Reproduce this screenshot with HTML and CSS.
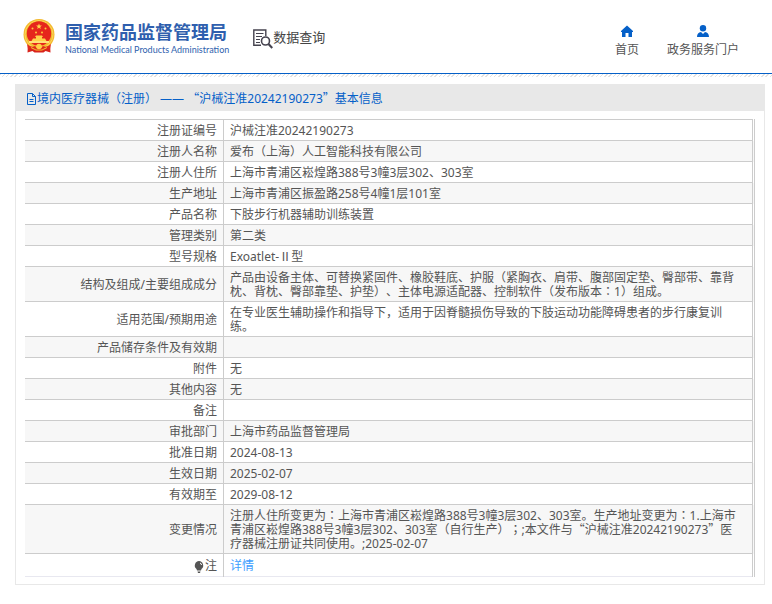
FILE: index.html
```
<!DOCTYPE html>
<html lang="zh-CN">

<head>
    <meta charset="utf-8">
    <title>数据查询 - 国家药品监督管理局</title>
    <link rel="stylesheet" href="styles.css">
</head>

<body>
    <header class="header">
        <a class="logo" href="#">
            <svg class="emblem" viewBox="0 0 32 35">
                <path d="M5 24l-.5 9.500 5-1.500 2 1.500h9l2-1.500 5 1.500L27 24z" fill="#d9241c" />
                <circle cx="16" cy="15.500" r="15.500" fill="#f3b92e" />
                <circle cx="16" cy="15.500" r="14" fill="none" stroke="#fbd65b" stroke-width="1" />
                <circle cx="16" cy="14.500" r="12.200" fill="#e6261c" />
                <path d="M16 4.500l.8 2h2.100l-1.700 1.400.6 2.100-1.800-1.200-1.800 1.200.6-2.100-1.700-1.400h2.100z" fill="#ffd84a" />
                <g fill="#ffc93c">
                    <circle cx="9.500" cy="9.500" r="1" />
                    <circle cx="22.500" cy="9.500" r="1" />
                    <circle cx="13" cy="13.500" r="1" />
                    <circle cx="19" cy="13.500" r="1" />
                </g>
                <path d="M12 18l1-1.500h6L20 18h-1v1.500h3l1.500 2.500h-15l1.500-2.500h3V18z" fill="#ffd24a" />
                <path d="M6 22h20v2H6z" fill="#ffe07a" />
                <path d="M4 25q4 4 8 2l2 2h4l2-2q4 2 8-2l-1 5-5-1-2 3h-8l-2-3-5 1z" fill="#e02a1c" />
                <circle cx="16" cy="27.500" r="2.800" fill="#ffcf47" />
                <path d="M8 28.500l5 2.500h6l5-2.500" fill="none" stroke="#f3b92e" />
            </svg>
            <span class="logo-text">
                <strong class="logo-cn">国家药品监督管理局</strong>
                <span class="logo-en">National Medical Products Administration</span>
            </span>
        </a>
        <a class="query" href="#">
            <svg class="query-icon" viewBox="0 0 20 20" fill="none" stroke="#45434f">
                <path d="M8 16.300H.8V1h12v6" stroke-width="1.400" />
                <path d="M3 4.500h7.500M3 7.500h6M3 10.500h4M3 13.500h4" stroke-width="1.200" />
                <circle cx="12.500" cy="12" r="4" stroke-width="1.600" />
                <path d="M15.500 15l3.800 4" stroke-width="2.200" />
            </svg>
            <span>数据查询</span>
        </a>
        <nav class="nav">
            <a href="#">
                <svg viewBox="0 0 12 12" fill="#0560c8">
                    <path d="M6 .5L0 6v1h1v5h3.500V8h3v4H11V7h1V6z" />
                </svg>
                <span>首页</span>
            </a>
            <a href="#">
                <svg viewBox="0 0 12 12" fill="#0560c8">
                    <circle cx="6" cy="3.200" r="3.200" />
                    <path d="M0 12c0-3 1.500-4.500 4-5l2 2 2-2c2.500.5 4 2 4 5z" />
                </svg>
                <span>政务服务门户</span>
            </a>
        </nav>
    </header>

    <main class="panel">
        <h1 class="panel-title">
            <svg class="doc-icon" viewBox="0 0 11 12" fill="none" stroke="#0560c8">
                <path d="M1.500.5h5l3 3v8h-8zM6.500.5v3h3M3.500 6.500h4M3.500 8.500h4" />
            </svg>
            <span>境内医疗器械（注册） —— <span class="cjk">“</span>沪械注准20242190273<span class="cjk">”</span>基本信息</span>
        </h1>
        <div class="panel-body">
            <table class="info">
                <tr><th>注册证编号</th><td>沪械注准20242190273</td></tr>
                <tr><th>注册人名称</th><td>爱布（上海）人工智能科技有限公司</td></tr>
                <tr><th>注册人住所</th><td>上海市青浦区崧煌路388号3幢3层302、303室</td></tr>
                <tr><th>生产地址</th><td>上海市青浦区振盈路258号4幢1层101室</td></tr>
                <tr><th>产品名称</th><td>下肢步行机器辅助训练装置</td></tr>
                <tr><th>管理类别</th><td>第二类</td></tr>
                <tr><th>型号规格</th><td>Exoatlet-Ⅱ型</td></tr>
                <tr><th>结构及组成/主要组成成分</th><td>产品由设备主体、可替换紧固件、橡胶鞋底、护服（紧胸衣、肩带、腹部固定垫、臀部带、靠背枕、背枕、臀部靠垫、护垫）、主体电源适配器、控制软件（发布版本<span class="mid" lang="zh-TW">：</span>1）组成。</td></tr>
                <tr><th>适用范围/预期用途</th><td>在专业医生辅助操作和指导下，适用于因脊髓损伤导致的下肢运动功能障碍患者的步行康复训练。</td></tr>
                <tr><th>产品储存条件及有效期</th><td></td></tr>
                <tr><th>附件</th><td>无</td></tr>
                <tr><th>其他内容</th><td>无</td></tr>
                <tr><th>备注</th><td></td></tr>
                <tr><th>审批部门</th><td>上海市药品监督管理局</td></tr>
                <tr><th>批准日期</th><td>2024-08-13</td></tr>
                <tr><th>生效日期</th><td>2025-02-07</td></tr>
                <tr><th>有效期至</th><td>2029-08-12</td></tr>
                <tr><th>变更情况</th><td>注册人住所变更为<span class="mid" lang="zh-TW">：</span>上海市青浦区崧煌路388号3幢3层302、303室。生产地址变更为<span class="mid" lang="zh-TW">：</span>1.上海市青浦区崧煌路388号3幢3层302、303室（自行生产）<span class="mid" lang="zh-TW">；</span>;本文件与<span class="cjk">“</span>沪械注准20242190273<span class="cjk">”</span>医疗器械注册证共同使用。;2025-02-07</td></tr>
                <tr class="note">
                    <th><svg class="bulb" viewBox="0 0 10 12"><path d="M5 0a4.500 4.500 0 0 1 2.500 8L7 9.500H3L2.500 8A4.500 4.500 0 0 1 5 0zM3.500 10.500h3L6 12H4z" fill="#555" /><path d="M6 2q1.500.5 1.500 2" fill="none" stroke="#fff" /></svg>注</th>
                    <td><a href="#">详情</a></td>
                </tr>
            </table>
        </div>
    </main>
</body>

</html>
```
FILE: styles.css
```
body {
    margin: 0;
    background: #fff;
    color: #555;
    font-family: "Noto Sans", "Noto Sans CJK SC", sans-serif;
    font-size: 12px;
    line-height: 14px;
    text-spacing-trim: space-all;
}

a {
    color: inherit;
    text-decoration: none;
}

/* full-width quotes */
.cjk {
    font-family: "Noto Sans CJK SC", sans-serif;
    line-height: 0;
}

/* punctuation centred in its cell */
.mid {
    font-family: "Noto Sans CJK TC", sans-serif;
    line-height: 0;
}

.header {
    display: flex;
    height: 73px;
    padding: 0 33px 0 23px;
    border-bottom: 1px solid #0560c8;
}

.header::after {
    content: "";
    position: absolute;
    left: 0;
    right: 0;
    top: 74px;
    height: 3px;
    background: repeating-linear-gradient(135deg, #e2e2e2 0 1px, #fff 1px 3px);
}

.logo {
    display: flex;
    align-items: center;
    gap: 10px;
    color: #2f5fae;
}

.emblem {
    width: 32px;
    height: 35px;
}

.logo-text {
    display: flex;
    flex-direction: column;
    gap: 2px;
    padding-top: 4px;
}

.logo-cn {
    font-size: 18px;
    line-height: 20px;
}

.logo-en {
    font-family: Lato, sans-serif;
    font-size: 9px;
    line-height: 12px;
}

.query {
    display: flex;
    align-items: center;
    margin-left: 24px;
    color: #444;
    font-size: 13px;
}

.query-icon {
    width: 20px;
    height: 20px;
    padding-top: 4px;
}

.nav {
    display: flex;
    gap: 28px;
    margin-left: auto;
    padding-top: 25px;
}

.nav a {
    display: flex;
    flex-direction: column;
    align-items: center;
    gap: 6px;
}

.nav svg {
    width: 12px;
    height: 12px;
}

.panel {
    margin: 10px 7px 0 15px;
    border: 1px solid #e8e8e8;
}

.panel-title {
    display: flex;
    align-items: center;
    margin: 0;
    padding: 1px 10px 0;
    height: 25px;
    background: #e8e8e8;
    color: #0560c8;
    font-size: 12px;
    font-weight: normal;
    line-height: 16px;
}

.doc-icon {
    width: 11px;
    height: 12px;
}

.panel-body {
    padding: 8px 9px 7px;
}

.info {
    width: 100%;
    border-collapse: collapse;
    border-right: 3px double #ccc;
    border-bottom: 1px solid #e8e8f0;
}

.info th,
.info td {
    height: 14px;
    padding: 4px 8px 2px 6px;
    border-top: 1px solid #ccc;
    text-align: left;
}

.info th {
    width: 186px;
    padding-right: 6px;
    border-right: 1px solid #ccc;
    font-weight: normal;
    text-align: right;
}

.info tr:nth-child(even) {
    background: #f7f7f7;
}

.info .note th,
.info .note td {
    height: 16px;
}

.note a {
    color: #409eff;
}

.bulb {
    width: 10px;
    height: 12px;
    margin-right: 1px;
    vertical-align: middle;
}
```
